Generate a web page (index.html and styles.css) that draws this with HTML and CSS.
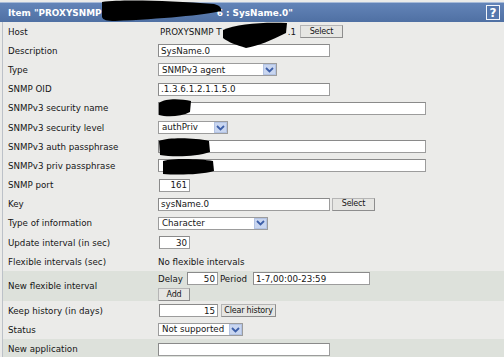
FILE: index.html
```html
<!DOCTYPE html>
<html>
<head>
<meta charset="utf-8">
<link rel="stylesheet" href="styles.css">
</head>
<body>
<div class="page">
  <div class="header">
    <span class="title">Item "PROXYSNMP T<span class="title-gap"></span>6 : SysName.0"</span>
    <span class="help">?</span>
  </div>
  <div class="form">
    <div class="row">
      <div class="label">Host</div>
      <div class="field host">PROXYSNMP T<span class="host-gap"></span>.1<button class="btn w43 ml4">Select</button></div>
    </div>
    <div class="row">
      <div class="label">Description</div>
      <div class="field"><input class="inp w172" value="SysName.0"></div>
    </div>
    <div class="row">
      <div class="label">Type</div>
      <div class="field"><div class="sel w119"><span class="sel-text">SNMPv3 agent</span><span class="arrow"><svg width="9" height="6" viewBox="0 0 9 6"><path d="M1 1 L4.5 4.5 L8 1" fill="none" stroke="#3d5fa8" stroke-width="1.8"/></svg></span></div></div>
    </div>
    <div class="row">
      <div class="label">SNMP OID</div>
      <div class="field"><input class="inp w172" value=".1.3.6.1.2.1.1.5.0"></div>
    </div>
    <div class="row">
      <div class="label">SNMPv3 security name</div>
      <div class="field"><input class="inp w268" value=""></div>
    </div>
    <div class="row">
      <div class="label">SNMPv3 security level</div>
      <div class="field"><div class="sel w70"><span class="sel-text">authPriv</span><span class="arrow"><svg width="9" height="6" viewBox="0 0 9 6"><path d="M1 1 L4.5 4.5 L8 1" fill="none" stroke="#3d5fa8" stroke-width="1.8"/></svg></span></div></div>
    </div>
    <div class="row">
      <div class="label">SNMPv3 auth passphrase</div>
      <div class="field"><input class="inp w268" value=""></div>
    </div>
    <div class="row">
      <div class="label">SNMPv3 priv passphrase</div>
      <div class="field"><input class="inp w268" value=""></div>
    </div>
    <div class="row">
      <div class="label">SNMP port</div>
      <div class="field"><input class="inp num w31 ml1" value="161"></div>
    </div>
    <div class="row">
      <div class="label">Key</div>
      <div class="field"><input class="inp w172" value="sysName.0"><button class="btn w43 ml2">Select</button></div>
    </div>
    <div class="row">
      <div class="label">Type of information</div>
      <div class="field"><div class="sel w110"><span class="sel-text">Character</span><span class="arrow"><svg width="9" height="6" viewBox="0 0 9 6"><path d="M1 1 L4.5 4.5 L8 1" fill="none" stroke="#3d5fa8" stroke-width="1.8"/></svg></span></div></div>
    </div>
    <div class="row">
      <div class="label">Update interval (in sec)</div>
      <div class="field"><input class="inp num w31 ml1" value="30"></div>
    </div>
    <div class="row">
      <div class="label">Flexible intervals (sec)</div>
      <div class="field">No flexible intervals</div>
    </div>
    <div class="row tall alt">
      <div class="label">New flexible interval</div>
      <div class="field stack">
        <div class="line">Delay<input class="inp num w31 ml4" value="50"><span class="ml2">Period</span><input class="inp w117 ml6" value="1-7,00:00-23:59"></div>
        <div class="line"><button class="btn w32">Add</button></div>
      </div>
    </div>
    <div class="row">
      <div class="label">Keep history (in days)</div>
      <div class="field"><input class="inp num w59 ml1" value="15"><button class="btn w55 ml3">Clear history</button></div>
    </div>
    <div class="row">
      <div class="label">Status</div>
      <div class="field"><div class="sel w85"><span class="sel-text">Not supported</span><span class="arrow"><svg width="9" height="6" viewBox="0 0 9 6"><path d="M1 1 L4.5 4.5 L8 1" fill="none" stroke="#3d5fa8" stroke-width="1.8"/></svg></span></div></div>
    </div>
    <div class="row alt">
      <div class="label">New application</div>
      <div class="field"><input class="inp w172" value=""></div>
    </div>
  </div>
  <svg class="redactions" width="504" height="357" viewBox="0 0 504 357">
    <path d="M102 2 C125 -1 172 1 214 4 C219 5 222 8 221 11 C205 15 160 19 115 21 C107 21 103 20 102 17 Z"/>
    <path d="M223 30 C236 24 262 22 287 23 L286 33 C272 40 258 46 246 48 C236 45 228 42 223 38 Z"/>
    <path d="M159 103 C166 98 181 99 191 101 L190 112 C181 117 166 117 159 115 Z"/>
    <path d="M159 141 C170 137 195 138 209 141 L210 152 C196 157 172 157 160 155 Z"/>
    <path d="M163 161 C175 158 200 159 213 161 L214 171 C200 175 176 175 163 174 Z"/>
  </svg>
</div>
</body>
</html>
```

FILE: styles.css
```css
html, body {
  margin: 0;
  padding: 0;
}
body {
  background: #ebebe9;
  font-family: "DejaVu Sans", Verdana, sans-serif;
  font-size: 8.7px;
  color: #151515;
}
.page {
  position: relative;
  width: 504px;
  height: 357px;
  overflow: hidden;
  padding-top: 2px;
  box-sizing: border-box;
}
.header {
  height: 20px;
  box-sizing: border-box;
  border-top: 1px solid #a8bbd8;
  background: linear-gradient(#6384b8, #4f70a3);
  display: flex;
  align-items: center;
  justify-content: space-between;
  padding: 0 4px 0 8px;
  color: #fff;
  font-weight: bold;
  font-size: 8.9px;
}
.title {
  display: flex;
  align-items: center;
  white-space: pre;
}
.title-gap {
  display: inline-block;
  width: 106px;
}
.help {
  width: 14px;
  height: 15px;
  box-sizing: border-box;
  border: 1px solid #f2f5fa;
  background: #5577ad;
  display: flex;
  align-items: center;
  justify-content: center;
  font-size: 12px;
  line-height: 1;
}
.form {
  margin-left: 2px;
  border-left: 1px solid #bcc1c8;
}
.row {
  display: flex;
  align-items: center;
  height: 19.2px;
}
.row.tall {
  height: 29.6px;
}
.row.alt {
  background: #dde1db;
}
.label {
  width: 155px;
  padding-left: 5px;
  box-sizing: border-box;
  flex-shrink: 0;
}
.field {
  display: flex;
  align-items: center;
  white-space: pre;
}
.field.host {
  padding-left: 2px;
}
.host-gap {
  display: inline-block;
  width: 66px;
}
.stack {
  flex-direction: column;
  align-items: flex-start;
  gap: 3px;
  padding-top: 1px;
}
.line {
  display: flex;
  align-items: center;
}
.inp {
  height: 13px;
  box-sizing: border-box;
  border: 1px solid #9c9c9c;
  border-top-color: #8a8a8a;
  border-left-color: #8a8a8a;
  background: #fff;
  font: inherit;
  color: #151515;
  padding: 0 2px;
  margin: 0;
  outline: none;
}
.inp.num {
  text-align: right;
}
.sel {
  height: 13px;
  box-sizing: border-box;
  border: 1px solid #9c9c9c;
  background: #fff;
  display: flex;
  align-items: center;
  justify-content: space-between;
  padding-left: 3px;
}
.sel-text {
  line-height: 1;
}
.arrow {
  width: 13px;
  height: 11px;
  box-sizing: border-box;
  background: #c9d6f0;
  border: 1px solid #b3c3e3;
  display: flex;
  align-items: center;
  justify-content: center;
}
.btn {
  height: 13px;
  box-sizing: border-box;
  border: 1px solid #8d8d8d;
  border-top-color: #b5b5b5;
  border-left-color: #b5b5b5;
  background: #e6e6e3;
  font-family: inherit;
  font-size: 8px;
  letter-spacing: -0.2px;
  color: #151515;
  padding: 0;
  margin: 0;
  line-height: 1;
  text-align: center;
  white-space: nowrap;
}
.w31 { width: 31px; }
.w32 { width: 32px; }
.w43 { width: 43px; }
.w55 { width: 55px; }
.w59 { width: 59px; }
.w70 { width: 70px; }
.w85 { width: 85px; }
.w110 { width: 110px; }
.w117 { width: 117px; }
.w119 { width: 119px; }
.w172 { width: 172px; }
.w268 { width: 268px; }
.ml1 { margin-left: 1px; }
.ml2 { margin-left: 2px; }
.ml3 { margin-left: 3px; }
.ml4 { margin-left: 4px; }
.ml6 { margin-left: 6px; }
.redactions {
  position: absolute;
  left: 0;
  top: 0;
  pointer-events: none;
}
.redactions path {
  fill: #000;
}
```
